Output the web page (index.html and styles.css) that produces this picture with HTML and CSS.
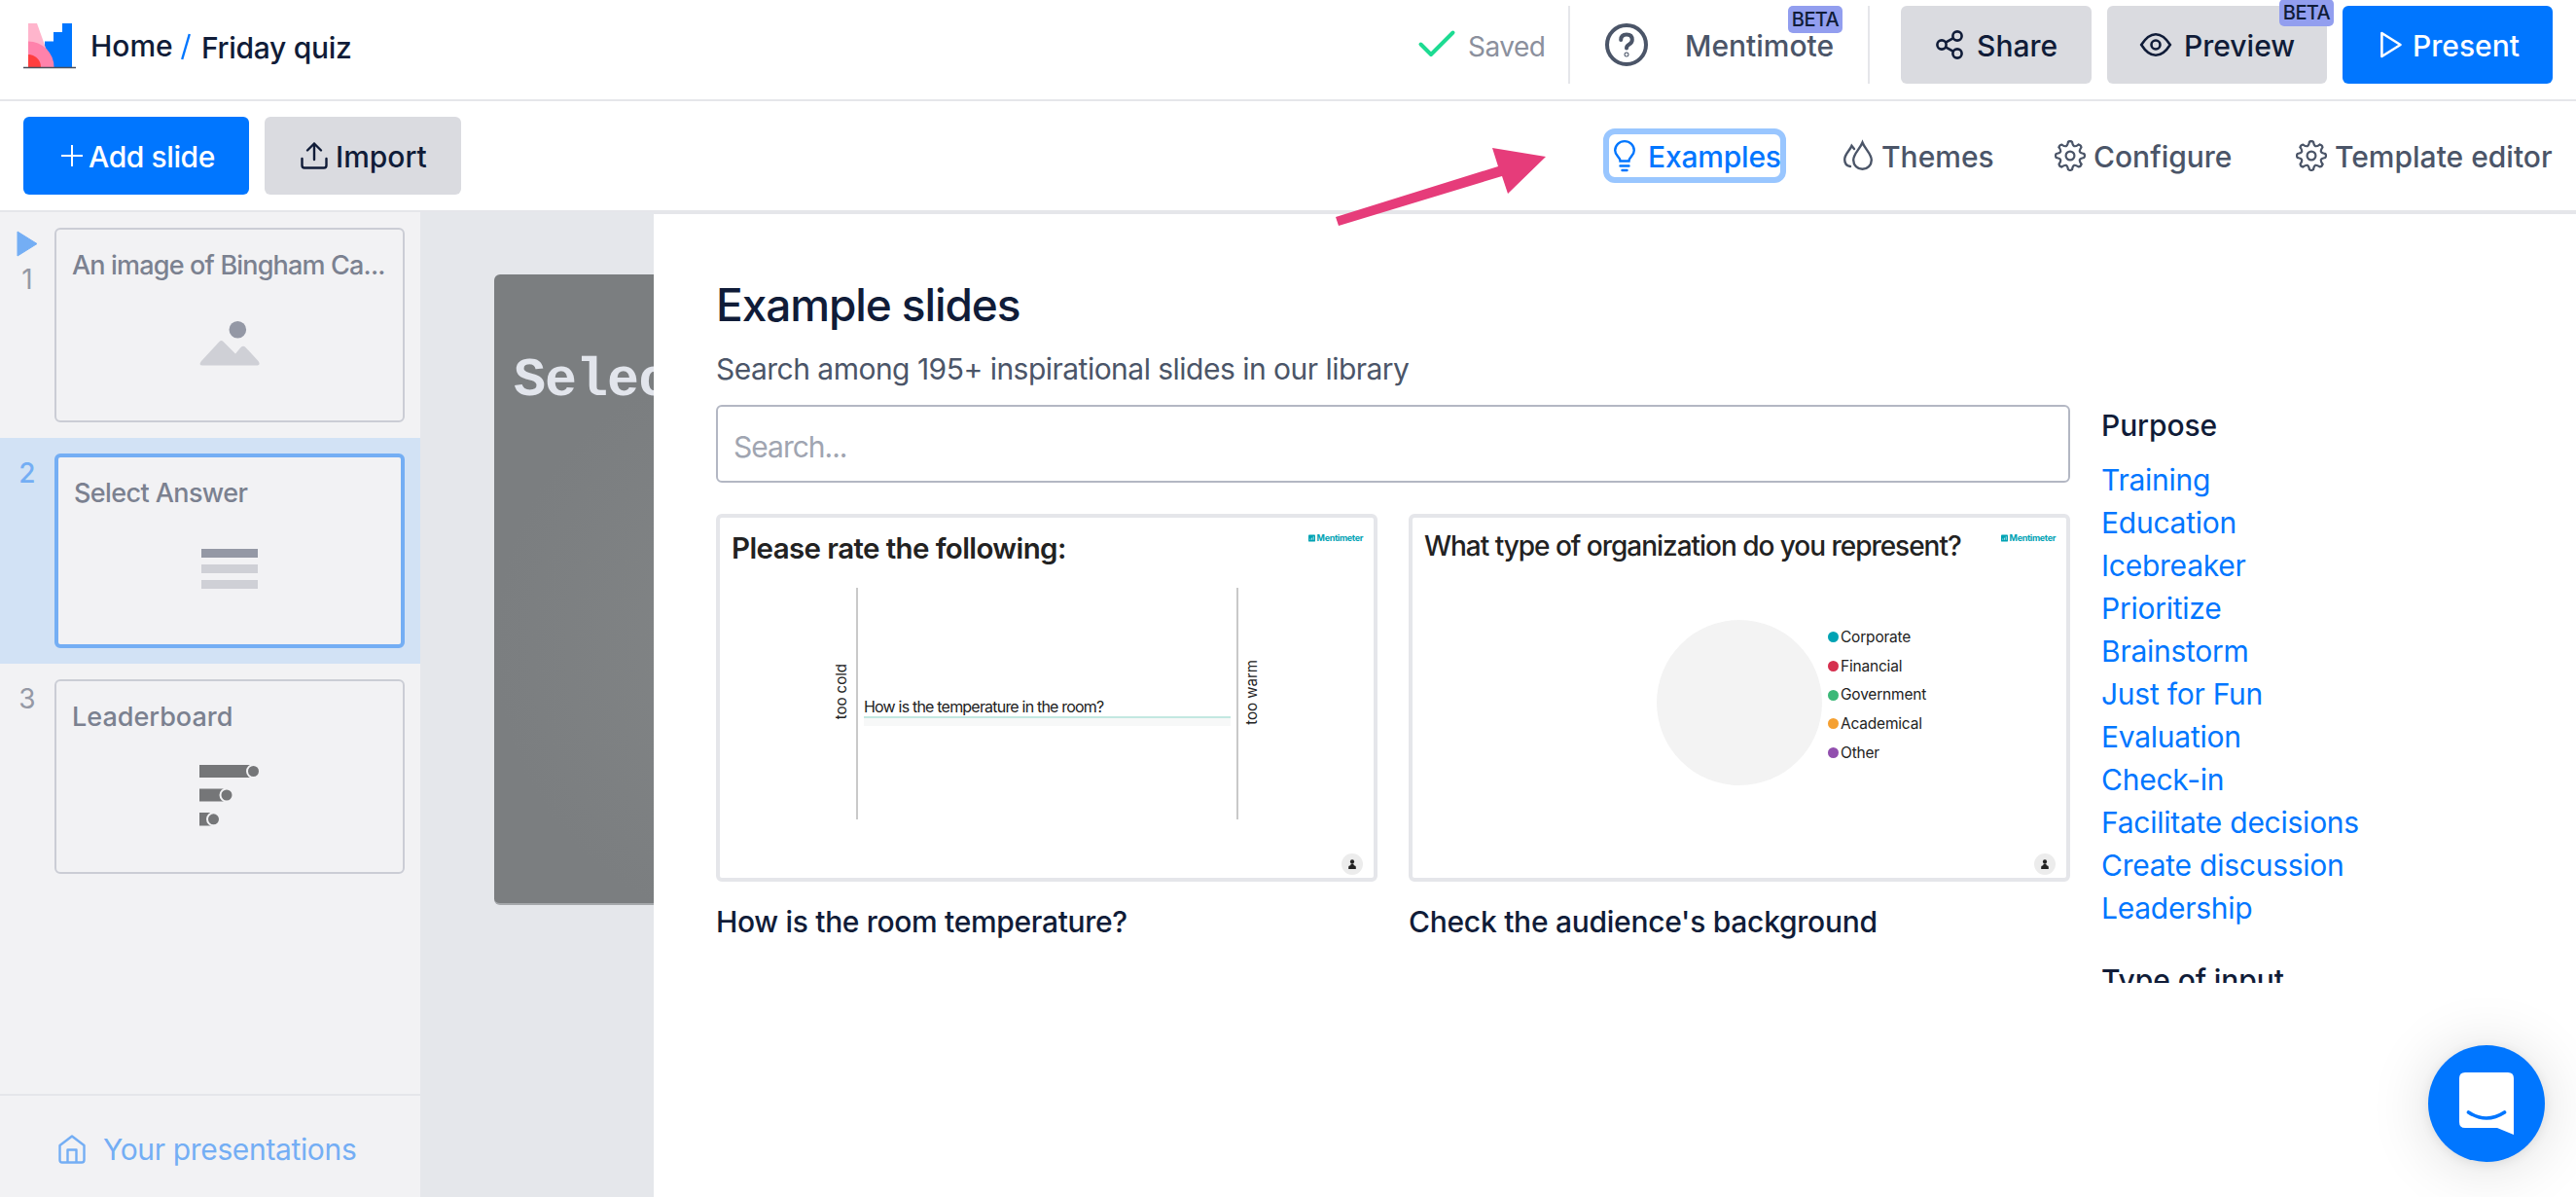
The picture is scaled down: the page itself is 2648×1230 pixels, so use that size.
FILE: index.html
```
<!DOCTYPE html>
<html lang="en">
<head>
	<meta charset="utf-8">
	<title>Friday quiz - Mentimeter</title>
	<link rel="stylesheet" href="styles.css">
</head>
<body>
	<!-- shared icons -->
	<svg class="defs" width="0" height="0">
		<defs>
			<path id="tooth" d="M-2 -14.2Q0 -15.8 2 -14.2C2.9 -9.2 4.5 -8.6 8.6 -11.45"/>
			<symbol id="gear" viewBox="0 0 32 32">
				<g transform="translate(16 16)" fill="none" stroke="currentColor" stroke-width="2.2" stroke-linecap="round">
					<use href="#tooth"/>
					<use href="#tooth" transform="rotate(45)"/>
					<use href="#tooth" transform="rotate(90)"/>
					<use href="#tooth" transform="rotate(135)"/>
					<use href="#tooth" transform="rotate(180)"/>
					<use href="#tooth" transform="rotate(225)"/>
					<use href="#tooth" transform="rotate(270)"/>
					<use href="#tooth" transform="rotate(315)"/>
					<circle r="4.4"/>
				</g>
			</symbol>
			<symbol id="menti" viewBox="0 0 8 8">
				<rect width="8" height="8" rx="1" fill="#00a3b4"/>
				<path d="M2 6V4.6M4 6V3.6M6 6V2" stroke="#b5e5ea" stroke-width="1"/>
			</symbol>
			<symbol id="person" viewBox="0 0 22 22">
				<circle cx="11" cy="11" r="11" fill="#ececec"/>
				<circle cx="11" cy="8.4" r="2.1" fill="#222"/>
				<path d="M7.2 16v-2.2q0-1.6 2-1.6l.6-1.8h2.4l.6 1.8q2 0 2 1.6V16z" fill="#222"/>
			</symbol>
		</defs>
	</svg>

	<header class="header">
		<svg class="logo" width="54" height="47" viewBox="0 0 54 47">
			<path d="M22 45V18.500h9V9h9V0h10v45z" fill="#0076ff"/>
			<path d="M5 0h9l10 28v17H5z" fill="#ffb5cc"/>
			<path d="M5 18.500A26.500 26.500 0 0 1 31.500 45H5z" fill="#ff82ab"/>
			<path d="M5 32A13 13 0 0 1 18 45H5z" fill="#ff3e3e"/>
			<path d="M0 45.500h54" stroke="#4a4f5c" stroke-width="1.500"/>
		</svg>
		<nav class="crumbs">
			<a class="home">Home</a>
			<svg width="10" height="28" viewBox="0 0 10 28"><path d="M1.200 27L8.800 1" stroke="#0076ff" stroke-width="2.400"/></svg>
			<span class="name">Friday quiz</span>
		</nav>
		<div class="saved">
			<svg width="38" height="28" viewBox="0 0 38 28"><path d="M2.500 14.500L13 25 35.500 2.500" fill="none" stroke="#1ddb92" stroke-width="4" stroke-linecap="round" stroke-linejoin="round"/></svg>
			<span>Saved</span>
		</div>
		<div class="remote">
			<svg width="44" height="44" viewBox="0 0 44 44" fill="none" stroke="#4b5568" stroke-width="4" stroke-linecap="round">
				<circle cx="22" cy="22" r="20"/>
				<path d="M16.200 17q0-5.600 5.800-5.600t5.800 5.400q0 3-3 4.700-2.800 1.500-2.800 4"/>
				<circle cx="22" cy="32" r=".5"/>
			</svg>
			<a class="mentimote">Mentimote<b class="beta">BETA</b></a>
		</div>
		<div class="buttons">
			<button class="btn grey share">
				<svg width="28" height="30" viewBox="0 0 28 30" fill="none" stroke="currentColor" stroke-width="2.600">
					<circle cx="6" cy="15" r="4.600"/><circle cx="22" cy="6" r="4.600"/><circle cx="22" cy="24" r="4.600"/>
					<path d="M10 12.700l8-4.500M10 17.300l8 4.500"/>
				</svg>
				<span>Share</span>
			</button>
			<button class="btn grey preview">
				<svg width="32" height="24" viewBox="0 0 32 24" fill="none" stroke="currentColor" stroke-width="2.600">
					<path d="M1.200 12Q8 1.200 16 1.200T30.800 12Q24 22.800 16 22.800T1.200 12z"/><circle cx="16" cy="12" r="4.500"/>
				</svg>
				<span>Preview</span>
				<b class="beta">BETA</b>
			</button>
			<button class="btn blue present">
				<svg width="22" height="28" viewBox="0 0 22 28"><path d="M1.400 2v24L20.500 14z" fill="none" stroke="#fff" stroke-width="2.600" stroke-linejoin="round"/></svg>
				<span>Present</span>
			</button>
		</div>
	</header>

	<div class="toolbar">
		<button class="btn blue add">
			<svg width="22" height="22" viewBox="0 0 22 22"><path d="M11 0v22M0 11h22" stroke="#fff" stroke-width="2"/></svg>
			<span>Add slide</span>
		</button>
		<button class="btn grey import">
			<svg width="28" height="28" viewBox="0 0 28 28" fill="none" stroke="currentColor" stroke-width="2.400" stroke-linecap="round" stroke-linejoin="round">
				<path d="M1.500 17v7q0 2.500 2.500 2.500h20q2.500 0 2.500-2.500v-7M14 18V1.500M7 8.500l7-7 7 7"/>
			</svg>
			<span>Import</span>
		</button>
		<nav class="tabs">
			<a class="tab examples">
				<svg width="22" height="32" viewBox="0 0 22 32" fill="none" stroke="currentColor" stroke-width="2.400" stroke-linecap="round">
					<path d="M6.500 21.500C6.500 17 1.200 16.500 1.200 10.500a9.800 9.400 0 0 1 19.600 0C20.800 16.500 15.500 17 15.500 21.500zM6.500 26.500h9M8.500 31h5"/>
				</svg>
				<span>Examples</span>
			</a>
			<a class="tab themes">
				<svg width="30" height="30" viewBox="0 0 30 30" fill="none" stroke="currentColor" stroke-width="2.400" stroke-linecap="round">
					<path d="M19.500 1.500C22 8 28.800 13 28.800 19.500a9.300 9.300 0 0 1-18.600 0C10.200 13 17 8 19.500 1.500zM11 8L8.500 4.800C6.500 10 1.200 13 1.200 19q0 6 5.800 7"/>
				</svg>
				<span>Themes</span>
			</a>
			<a class="tab configure">
				<svg width="32" height="32"><use href="#gear"/></svg>
				<span>Configure</span>
			</a>
			<a class="tab template">
				<svg width="32" height="32"><use href="#gear"/></svg>
				<span>Template editor</span>
			</a>
		</nav>
	</div>

	<main class="main">
		<aside class="sidebar">
			<div class="slide">
				<div class="num first">
					<svg width="22" height="27" viewBox="0 0 22 27"><path d="M1 1v25L21 13.500z" fill="#74aef4" stroke="#74aef4" stroke-linejoin="round"/></svg>
					1
				</div>
				<div class="thumb">
					<p class="t1">An image of Bingham Ca...</p>
					<svg class="pic" width="62" height="46" viewBox="0 0 62 46">
						<circle cx="39.300" cy="8.800" r="8.800" fill="#9498a5"/>
						<path d="M2 41L20.500 21q2-2 4 0L37 33.500 42.500 27q2.500-2.500 5 0L60.500 41q3 4.500-2 4.500H3.500Q-1.500 45.500 2 41z" fill="#cfd0d6"/>
					</svg>
				</div>
			</div>
			<div class="slide active">
				<div class="num">2</div>
				<div class="thumb">
					<p class="t2">Select Answer</p>
					<svg class="bars" width="58" height="42" viewBox="0 0 58 42">
						<path d="M0 0h58v9H0z" fill="#9498a5"/>
						<path d="M0 16h58v9H0zM0 32h58v9H0z" fill="#cfd0d6"/>
					</svg>
				</div>
			</div>
			<div class="slide">
				<div class="num">3</div>
				<div class="thumb">
					<p class="t3">Leaderboard</p>
					<svg class="board" width="62" height="63" viewBox="0 0 62 63" fill="#757678">
						<path d="M0 0h55v13H0zM0 24.500h27v13H0zM0 49h13v13.500H0z"/>
						<g stroke="#f2f2f4" stroke-width="2">
							<circle cx="55.500" cy="6.500" r="6.500"/><circle cx="28" cy="31" r="6.500"/><circle cx="14.500" cy="55.800" r="6.500"/>
						</g>
					</svg>
				</div>
			</div>
			<a class="yours">
				<svg width="28" height="30" viewBox="0 0 28 30" fill="none" stroke="currentColor" stroke-width="2.400" stroke-linejoin="round">
					<path d="M1.500 11L14 1.500 26.500 11v15q0 2.500-2.500 2.500H4q-2.500 0-2.500-2.500zM9.500 28V15.500h9V28"/>
				</svg>
				<span>Your presentations</span>
			</a>
		</aside>

		<section class="stage">
			<div class="canvas">Select Answer</div>
		</section>

		<section class="panel">
			<h1>Example slides</h1>
			<p class="lead">Search among 195+ inspirational slides in our library</p>
			<div class="columns">
				<div class="results">
					<div class="search">Search...</div>
					<div class="cards">
						<div class="item">
							<div class="card scales">
								<div class="top"><h3>Please rate the following:</h3><span class="brand"><svg width="7" height="8"><use href="#menti"/></svg>Mentimeter</span></div>
								<div class="chart">
									<span class="side"><i class="cold">too cold</i></span>
									<div class="plot">
										<p>How is the temperature in the room?</p>
										<div class="track"></div>
									</div>
									<span class="side"><i class="warm">too warm</i></span>
								</div>
								<svg class="user" width="22" height="22"><use href="#person"/></svg>
							</div>
							<h2 class="c1">How is the room temperature?</h2>
						</div>
						<div class="item">
							<div class="card pie">
								<div class="top"><h3>What type of organization do you represent?</h3><span class="brand"><svg width="7" height="8"><use href="#menti"/></svg>Mentimeter</span></div>
								<div class="chart">
									<div class="disc"></div>
									<ul class="legend">
										<li class="teal">Corporate</li>
										<li class="red">Financial</li>
										<li class="green">Government</li>
										<li class="orange">Academical</li>
										<li class="purple">Other</li>
									</ul>
								</div>
								<svg class="user" width="22" height="22"><use href="#person"/></svg>
							</div>
							<h2 class="c2">Check the audience's background</h2>
						</div>
					</div>
				</div>
				<div class="filters">
					<h4>Purpose</h4>
					<a>Training</a>
					<a>Education</a>
					<a>Icebreaker</a>
					<a>Prioritize</a>
					<a>Brainstorm</a>
					<a>Just for Fun</a>
					<a>Evaluation</a>
					<a>Check-in</a>
					<a>Facilitate decisions</a>
					<a>Create discussion</a>
					<a>Leadership</a>
					<h4 class="next">Type of input</h4>
				</div>
			</div>
		</section>
	</main>

	<svg class="arrow" width="220" height="84" viewBox="0 0 220 84"><path d="M3 73L170 21 164 2 219 11 180 49 174 31 6 82z" fill="#e63c7a"/></svg>

	<div class="chat">
		<svg width="56" height="64" viewBox="0 0 56 64">
			<path d="M6 0h44q6 0 6 6v58l-17-7H6q-6 0-6-6V6q0-6 6-6z" fill="#fff"/>
			<path d="M9.500 41q18.500 12 37 0" fill="none" stroke="#0076ff" stroke-width="3.600" stroke-linecap="round"/>
		</svg>
	</div>
</body>
</html>
```
FILE: styles.css
```
*{
	margin: 0;
	padding: 0;
	box-sizing: border-box;
}
body{
	width: 2648px;
	height: 1230px;
	overflow: hidden;
	position: relative;
	display: flex;
	flex-direction: column;
	background: #fff;
	color: #101c38;
	font-family: Inter, "Liberation Sans", sans-serif;
	font-size: 30px;
	line-height: 44px;
	white-space: nowrap;
}
svg{
	display: block;
	flex: none;
	overflow: visible;
}
.defs{
	position: absolute;
}

/* header */
.header{
	height: 104px;
	flex: none;
	display: flex;
	border-bottom: 2px solid #e5e6ea;
	padding: 6px 24px 0;
	font-weight: 500;
}
.logo{
	margin-top: 18px;
}
.crumbs{
	display: flex;
	margin: 19px 0 0 15px;
}
.crumbs svg{
	margin: 9px 11px 0 10px;
}
.home{
	width: 83px;
}
.crumbs .name{
	padding-top: 2px;
	letter-spacing: -.3px;
}
.saved{
	display: flex;
	height: 80px;
	align-items: center;
	margin-left: auto;
	padding: 2px 24px 0 0;
	border-right: 2px solid #e5e6ea;
	color: #8b909d;
	font-size: 28px;
	font-weight: 400;
	gap: 13px;
}
.saved svg{
	margin-top: -4px;
}
.saved span{
	width: 79px;
	padding-top: 2px;
	letter-spacing: -.5px;
}
.remote{
	display: flex;
	height: 80px;
	align-items: center;
	padding: 0 35px 0 36px;
	border-right: 2px solid #e5e6ea;
	color: #4b5568;
	gap: 38px;
}
.mentimote{
	position: relative;
	width: 153px;
	padding-top: 2px;
}
.beta{
	position: absolute;
	width: 56px;
	height: 28px;
	border-radius: 5px;
	background: #929eef;
	color: #101c38;
	font-size: 20px;
	line-height: 29px;
	font-weight: 500;
	text-align: center;
	letter-spacing: -.6px;
}
.mentimote .beta{
	left: 106px;
	top: -17px;
}
.buttons{
	display: flex;
	gap: 16px;
	margin-left: 32px;
}
.btn{
	position: relative;
	display: flex;
	align-items: center;
	height: 80px;
	border: 0;
	border-radius: 6px;
	font: inherit;
	font-weight: 500;
}
.btn span, .tab span{
	padding-top: 2px;
}
.btn.blue{
	background: #0076ff;
	color: #fff;
}
.btn.grey{
	background: #dadbe0;
	color: #101c38;
}
.share{
	width: 196px;
	padding-left: 36px;
	gap: 14px;
}
.preview{
	width: 226px;
	padding-left: 34px;
	gap: 13px;
}
.preview .beta{
	left: 177px;
	top: -7px;
}
.present{
	width: 216px;
	padding-left: 39px;
	gap: 11px;
}

/* toolbar */
.toolbar{
	height: 116px;
	flex: none;
	display: flex;
	padding: 16px 24px 0;
	border-bottom: 4px solid #e5e6ea;
	font-weight: 500;
}
.add{
	width: 232px;
	margin-right: 16px;
	padding-left: 39px;
	gap: 6px;
	letter-spacing: -.4px;
}
.import{
	width: 202px;
	padding-left: 37px;
	gap: 8px;
}
.tabs{
	display: flex;
	align-items: center;
	height: 80px;
	margin-left: auto;
	color: #4b5568;
}
.tab{
	display: flex;
	align-items: center;
	gap: 8px;
}
.examples{
	height: 56px;
	width: 188px;
	border: 6px solid #99c6ff;
	border-radius: 12px;
	padding-left: 5px;
	gap: 13px;
	color: #0076ff;
	margin-right: 59px;
	letter-spacing: -.2px;
}
.themes{
	width: 217px;
	gap: 9px;
}
.configure{
	width: 248px;
}
.template{
	width: 264px;
}

/* slide list */
.main{
	flex: 1;
	display: flex;
	min-height: 0;
}
.sidebar{
	width: 432px;
	margin-top: -2px;
	display: flex;
	flex-direction: column;
	background: #f2f2f4;
}
.slide{
	display: flex;
	height: 232px;
	padding: 16px 16px 16px 0;
}
.slide.active{
	background: #d2e2f5;
}
.num{
	width: 56px;
	text-align: center;
	color: #9599a5;
	font-size: 28px;
	line-height: 40px;
}
.num.first{
	padding-top: 3px;
}
.num svg{
	margin: 0 0 3px 17px;
}
.active .num{
	color: #74aef4;
	font-weight: 500;
}
.thumb{
	width: 360px;
	height: 200px;
	border: 2px solid #cbcdd5;
	border-radius: 6px;
	padding: 17px 16px 18px;
	color: #7b8190;
	font-size: 27px;
	line-height: 40px;
	font-weight: 500;
}
.t1{
	letter-spacing: -.82px;
}
.t2{
	letter-spacing: -.6px;
}
.active .thumb{
	border: 4px solid #74aef4;
	background: #f2f2f4;
}
.pic{
	margin: 37px 0 0 131px;
}
.bars{
	margin: 37px 0 0 131px;
}
.board{
	margin: 29px 0 0 131px;
}
.yours{
	margin-top: auto;
	height: 106px;
	display: flex;
	padding: 40px 0 0 60px;
	border-top: 2px solid #e5e6ea;
	color: #74aef4;
	gap: 18px;
}
.yours span{
	margin-top: -7px;
	letter-spacing: -.35px;
}

.stage{
	width: 240px;
	margin-top: -2px;
	background: #e5e7eb;
	padding: 64px 0 0 76px;
	overflow: hidden;
}
.canvas{
	width: 900px;
	height: 648px;
	border-radius: 6px;
	padding: 72px 0 0 20px;
	background: radial-gradient(circle at 300px 380px, #838687, #7b7e80 300px);
	border-bottom: 2px solid #a5a8ab;
	color: #e2e5ec;
	font: bold 55px/76px "Liberation Mono", monospace;
	letter-spacing: -1px;
}

/* example library */
.panel{
	flex: 1;
	padding: 60px 0 0 64px;
}
.panel h1{
	font-size: 46px;
	line-height: 66px;
	font-weight: 500;
	letter-spacing: -1.1px;
}
.lead{
	color: #4b5568;
	margin-top: 11px;
	line-height: 44px;
	letter-spacing: -.52px;
}
.columns{
	display: flex;
	gap: 32px;
	margin-top: 15px;
	height: 594px;
	overflow: hidden;
}
.results{
	width: 1392px;
}
.search{
	height: 80px;
	border: 2px solid #b3b7c3;
	border-radius: 6px;
	padding: 19px 0 0 16px;
	color: #a0a5b1;
	letter-spacing: -1px;
}
.cards{
	display: flex;
	gap: 32px;
	margin-top: 32px;
}
.item{
	width: 680px;
}
.item h2{
	font-size: 30px;
	line-height: 44px;
	font-weight: 500;
	margin-top: 19px;
}
.item .c1{
	letter-spacing: -.33px;
}
.item .c2{
	letter-spacing: -.27px;
}
.card{
	position: relative;
	height: 378px;
	border: 4px solid #e5e6ea;
	border-radius: 6px;
	color: #222;
}
.top{
	display: flex;
	justify-content: space-between;
	height: 72px;
	padding: 11px 11px 0 12px;
}
.top h3{
	font-size: 29.5px;
	line-height: 40px;
	font-weight: 600;
	letter-spacing: -.6px;
}
.pie h3{
	font-size: 28px;
	margin-top: -2px;
	font-weight: 500;
	letter-spacing: -1.03px;
}
.brand{
	display: flex;
	gap: 2px;
	height: 8px;
	margin-top: 6px;
	color: #00a3b4;
	font-size: 9px;
	line-height: 8px;
	font-weight: 700;
	letter-spacing: -.35px;
}
.scales .chart{
	display: flex;
	height: 238px;
	padding-left: 112px;
}
.side{
	width: 28px;
	display: flex;
	align-items: center;
	justify-content: center;
}
.side i{
	writing-mode: vertical-rl;
	transform: rotate(180deg);
	font-style: normal;
	font-size: 15px;
	line-height: 20px;
}
.cold{
	margin: 0 2px 24px 0;
}
.warm{
	margin: 0 0 24px 0;
}
.plot{
	width: 393px;
	border: solid #c9c9c9;
	border-width: 0 2px;
	padding: 112px 6px 0;
	font-size: 16px;
	line-height: 20px;
	letter-spacing: -.8px;
}
.track{
	height: 10px;
	background: #f7f8f8;
	border-top: 2px solid #c3e8e1;
}
.user{
	position: absolute;
	right: 11px;
	bottom: 3px;
}
.pie .chart{
	display: flex;
	padding: 33px 0 0 251px;
}
.disc{
	width: 170px;
	height: 170px;
	border-radius: 50%;
	background: #f3f3f3;
}
.legend{
	list-style: none;
	margin: 3px 0 0 6px;
	font-size: 15.5px;
	line-height: 29.700px;
	letter-spacing: -.2px;
}
.legend li{
	display: flex;
	align-items: center;
	gap: 2px;
}
.legend li::before{
	content: "";
	width: 11px;
	height: 11px;
	border-radius: 50%;
}
.legend .teal::before{
	background: #00a3b4;
}
.legend .red::before{
	background: #d6304f;
}
.legend .green::before{
	background: #3bb878;
}
.legend .orange::before{
	background: #f5a031;
}
.legend .purple::before{
	background: #914fae;
}

.filters{
	margin-top: -1px;
}
.filters h4{
	font-size: 30px;
	font-weight: 500;
	line-height: 44px;
	margin-bottom: 12px;
	letter-spacing: -.1px;
}
.filters h4.next{
	margin-top: 30px;
}
.filters a{
	display: block;
	color: #0076ff;
	letter-spacing: -.25px;
}

/* overlays */
.arrow{
	position: absolute;
	left: 1370px;
	top: 150px;
}
.chat{
	position: absolute;
	left: 2496px;
	top: 1074px;
	width: 120px;
	height: 120px;
	border-radius: 50%;
	background: #0076ff;
	padding: 28px 32px;
	box-shadow: 0 2px 12px rgba(0,0,0,.08), 0 4px 64px rgba(0,0,0,.14);
}
```
